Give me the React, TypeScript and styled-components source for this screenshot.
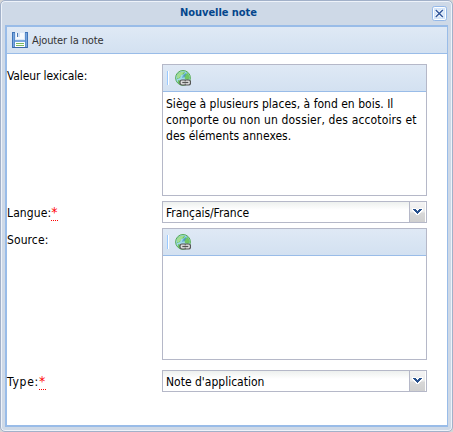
import React from 'react';
import styled, { createGlobalStyle } from 'styled-components';

const GlobalStyle = createGlobalStyle`
  * { box-sizing: border-box; }
  body {
    margin: 0;
    background: #d6d6d6;
    color: #000;
    font: 12px/16px "DejaVu Sans Condensed", "DejaVu Sans", sans-serif;
  }
`;

const Window = styled.section`
  display: flex;
  flex-direction: column;
  width: 453px;
  height: 432px;
  padding: 0 3px 3px;
  background: #ced9e7;
  border: 1px solid #a2b1c9;
  border-radius: 5px;
  box-shadow: inset 0 0 0 1px #eef3fa;
`;

const Header = styled.header`
  display: flex;
  align-items: center;
  height: 24px;
  padding: 0 2px 0 1px;
`;

const Title = styled.h1`
  flex: 1;
  margin: 0;
  text-align: center;
  color: #04468c;
  font-size: 11px;
  font-weight: bold;
  line-height: 16px;
  letter-spacing: -0.05px;
`;

const CloseButton = styled.button`
  width: 15px;
  height: 15px;
  padding: 0;
  border: 0;
  background: none;
  svg { display: block; }
`;

const Body = styled.div`
  flex: 1;
  margin: 0 1px 1px 1px;
  border: solid #99bce8;
  border-width: 2px 1px 2px 2px;
  background: #fff;
`;

const ActionBar = styled.div`
  display: flex;
  align-items: center;
  height: 27px;
  padding-left: 5px;
  border-bottom: 1px solid #99bce8;
  background: linear-gradient(#dfe9f5, #d3e1f1);
`;

const ActionButton = styled.button`
  display: flex;
  align-items: center;
  gap: 4px;
  padding: 0;
  border: 0;
  background: none;
  color: #333;
  font: 11px/16px "DejaVu Sans Condensed", sans-serif;
  letter-spacing: -0.12px;
`;

const ActionText = styled.span`
  padding-top: 2px;
`;

const Form = styled.div`
  display: grid;
  grid-template-columns: 155px 265px;
  grid-template-rows: 137px 27px 142px 22px;
  padding-top: 10px;
`;

const Label = styled.label<{ $tracking?: number }>`
  display: flex;
  align-items: flex-start;
  padding-top: 4px;
  letter-spacing: ${p => p.$tracking ?? 0}px;
  white-space: nowrap;
`;

const Required = styled.span`
  width: 7px;
  height: 16px;
  color: #f00;
  font-size: 14px;
  line-height: 14px;
  letter-spacing: 0;
  border-bottom: 1px dotted #f00;
`;

const Editor = styled.div`
  height: 132px;
  border: 1px solid #b5b8c8;
  background: #fff;
`;

const EditorBar = styled.div`
  display: flex;
  align-items: center;
  height: 27px;
  padding-left: 4px;
  border-bottom: 1px solid #99bce8;
  background: linear-gradient(#dfe9f5, #d3e1f1);
`;

const Separator = styled.span`
  width: 2px;
  height: 14px;
  margin-right: 6px;
  border-left: 1px solid #98c8ff;
  border-right: 1px solid #fff;
`;

const EditorText = styled.p`
  margin: 4px 0 0 3px;
`;

const TextLine = styled.span<{ $tracking: number }>`
  display: block;
  white-space: nowrap;
  letter-spacing: ${p => p.$tracking}px;
`;

const Combo = styled.div`
  display: flex;
  height: 22px;
  border: 1px solid #b5b8c8;
  background: linear-gradient(#edf0ee, #fff 8px);
`;

const ComboValue = styled.span<{ $tracking: number }>`
  flex: 1;
  padding: 3px 3px 1px;
  letter-spacing: ${p => p.$tracking}px;
`;

const Trigger = styled.span`
  display: flex;
  justify-content: center;
  width: 17px;
  border-left: 1px solid #b5b8c8;
  border-right: 1px solid #fff;
  background: linear-gradient(#f4f4f4, #ebebeb 10px, #d8d8d8 11px, #d0d0d0);
`;

const SaveIcon = () => (
  <svg width="16" height="16" viewBox="0 0 16 16" shapeRendering="crispEdges">
    <rect width="16" height="16" rx="1" fill="#3f74b8" />
    <rect x="1" y="1" width="14" height="14" fill="#79a7de" />
    <rect x="2" y="1" width="1" height="14" fill="#5b8fce" />
    <rect x="13" y="1" width="1" height="14" fill="#5b8fce" />
    <rect x="3" y="0" width="10" height="8" fill="#dbe8f7" />
    <rect x="4" y="1" width="8" height="6" fill="#f5f9fd" />
    <rect x="5" y="1" width="1" height="4" fill="#4d7ab4" />
    <rect x="6" y="1" width="2" height="4" fill="#d4e2f3" />
    <rect x="3" y="10" width="10" height="5" fill="#fff" />
    <rect x="4" y="11" width="8" height="1" fill="#79b960" />
    <rect x="4" y="13" width="8" height="1" fill="#79b960" />
    <rect x="1" y="15" width="14" height="1" fill="#3a69a8" />
  </svg>
);

const GlobeLinkIcon = () => (
  <svg width="16" height="16" viewBox="0 0 16 16">
    <circle cx="8" cy="7.9" r="7.4" fill="#9ed8e9" stroke="#55ac51" />
    <path d="M2 5Q5 1 10 2L9 4 6 5 5 8 2 9zM9 5l4-2 2 5-2 2-3-1zM3 10l4 1v4l-4-2z" fill="#70c764" />
    <path d="M2 5Q5 1 9 2L4 8H2z" fill="#b4e6a2" opacity=".75" />
    <path d="M8 5l4-3-2 5-3 1z" fill="#418fc1" opacity=".65" />
    <rect x="5" y="10" width="10.5" height="5" rx="2" fill="#ddd" stroke="#555" strokeWidth="1.2" />
    <path d="M10.2 10v1.4M10.2 13.6V15" stroke="#555" />
    <path d="M7.3 12.5h6" stroke="#555" strokeWidth="1.2" />
  </svg>
);

const CloseIcon = () => (
  <svg width="15" height="15" viewBox="0 0 15 15">
    <rect x=".5" y=".5" width="14" height="14" rx="2" fill="#d5e6fa" stroke="#94b8e8" />
    <rect x="1.5" y="1.5" width="12" height="12" rx="1" fill="none" stroke="#fff" />
    <path d="M3.8 4l7 7M10.8 4l-7 7" stroke="#fff" strokeWidth="3" />
    <path d="M3.8 4l7 7M10.8 4l-7 7" stroke="#31569b" strokeWidth="1.5" />
  </svg>
);

const Arrow = () => (
  <svg width="11" height="9" viewBox="0 0 11 9" shapeRendering="crispEdges">
    <path d="M0 0h4v1h3V0h4v3h-1v1H9v1H8v1H7v1H4V6H3V5H2V4H1V3H0z" fill="#fff" />
    <path d="M1 1h3v1h1v1h1V2h1V1h3v1H9v1H8v1H7v1H6v1H5V5H4V4H3V3H2V2H1z" fill="#27508d" />
  </svg>
);

const ArrowSlot = styled.span`
  height: 9px;
  margin-top: 6px;
  svg { display: block; }
`;

const RichEditor = ({ children }: { children?: React.ReactNode }) => (
  <Editor>
    <EditorBar><Separator /><GlobeLinkIcon /></EditorBar>
    {children && <EditorText>{children}</EditorText>}
  </Editor>
);

const Select = ({ value, tracking = 0 }: { value: string; tracking?: number }) => (
  <Combo>
    <ComboValue $tracking={tracking}>{value}</ComboValue>
    <Trigger><ArrowSlot><Arrow /></ArrowSlot></Trigger>
  </Combo>
);

export default function App() {
  return (
    <>
      <GlobalStyle />
      <Window>
        <Header>
          <Title>Nouvelle note</Title>
          <CloseButton aria-label="Fermer"><CloseIcon /></CloseButton>
        </Header>
        <Body>
          <ActionBar>
            <ActionButton><SaveIcon /><ActionText>Ajouter la note</ActionText></ActionButton>
          </ActionBar>
          <Form>
            <Label $tracking={-0.12}>Valeur lexicale:</Label>
            <RichEditor>
              <TextLine $tracking={0.01}>Siège à plusieurs places, à fond en bois. Il</TextLine>
              <TextLine $tracking={0.14}>comporte ou non un dossier, des accotoirs et</TextLine>
              <TextLine $tracking={0.03}>des éléments annexes.</TextLine>
            </RichEditor>
            <Label $tracking={0.12}>Langue:<Required>*</Required></Label>
            <Select value="Français/France" tracking={-0.05} />
            <Label $tracking={0.1}>Source:</Label>
            <RichEditor />
            <Label $tracking={0.75}>Type:<Required>*</Required></Label>
            <Select value="Note d'application" />
          </Form>
        </Body>
      </Window>
    </>
  );
}
